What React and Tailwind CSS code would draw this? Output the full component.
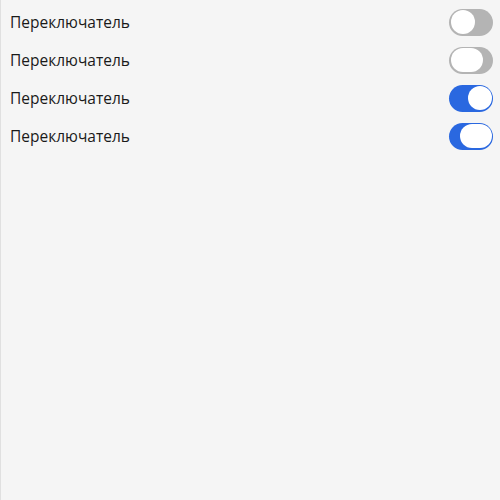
import React from "react";

function Toggle({ on, pressed }) {
  return (
    <div
      className={`flex h-[27px] w-[44px] items-center rounded-full p-[1.5px] ${
        on ? "justify-end bg-[#2a68e0]" : "justify-start bg-[#b4b4b4]"
      }`}
    >
      <div
        className={`h-[24px] rounded-full bg-white ${pressed ? "w-[32px]" : "w-[24px]"}`}
      />
    </div>
  );
}

export default function App() {
  const rows = [
    { on: false, pressed: false },
    { on: false, pressed: true },
    { on: true, pressed: false },
    { on: true, pressed: true },
  ];
  return (
    <div
      className="flex h-[500px] w-[500px] flex-col border-l border-[#e0e0e0] bg-[#f5f5f5] pt-[3px]"
      style={{ fontFamily: '"Open Sans", sans-serif' }}
    >
      {rows.map((r, i) => (
        <div key={i} className="flex h-[38px] items-center justify-between pl-[9px] pr-[7px]">
          <span className="mt-[2px] text-[15.5px] text-[#1a1a1a]">Переключатель</span>
          <Toggle on={r.on} pressed={r.pressed} />
        </div>
      ))}
    </div>
  );
}
